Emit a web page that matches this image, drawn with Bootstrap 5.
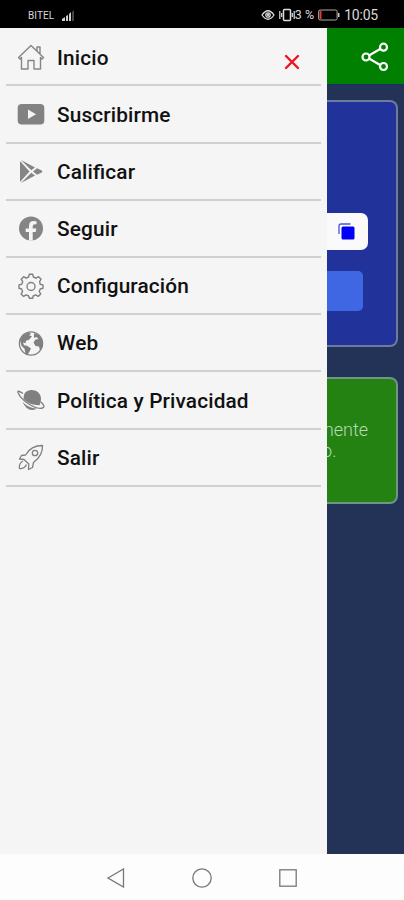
<!DOCTYPE html>
<html lang="es">
<head>
<meta charset="utf-8">
<meta name="viewport" content="width=device-width, initial-scale=1">
<title>Menú</title>
<link href="https://cdn.jsdelivr.net/npm/bootstrap@5.3.0/dist/css/bootstrap.min.css" rel="stylesheet">
<style>
body{font-family:Roboto,"Noto Sans",sans-serif;background:#fdfdfd;height:900px;overflow:hidden}
svg{display:block;flex:none}
.status{height:28px;background:#000;color:#d8d8d8;padding:2px 26px 0 28px}
.carrier{font-size:10px;letter-spacing:.1px;font-weight:400}
.clock{font-size:14px;letter-spacing:-.2px}
.pct{font-size:12.5px}
.stage{height:826px}
.drawer{width:326.5px;background:#f5f5f5;padding:0 6px}
.item{height:57.2px;border-bottom:2px solid #d0d0d0;padding:2px 0 0 11px;color:#111;font-size:20.8px;font-weight:500;letter-spacing:.15px;font-feature-settings:"liga" 1;line-height:1}
.item:first-child{height:58.4px}
.item:first-child span{padding-top:2px}
.item svg{width:28px;height:28px;margin-right:12px}
.item .closer{width:16px;height:16px;margin:9px 21px 0 auto}
.page{width:77.5px;background:#233358}
.topbar{height:57px;background:#008000;border-bottom:1px solid #17306a;padding:1px 15px 0 0}
.panel{width:71.5px;border:2px solid #6d7b9c;border-left:0;border-radius:0 8px 8px 0}
.blue{height:247px;margin-top:15px;background:#21339a}
.green{height:127px;margin-top:30px;background:#238212;border-color:#6f9583;color:#b9dab4;font-size:18px;line-height:21.5px;font-weight:300}
.field{width:41px;height:37px;margin-top:111px;background:#fafafa;border-radius:0 7px 7px 0;padding-right:13px}
.action{width:36px;height:40px;margin-top:21px;background:#4067e3;border-radius:0 5px 5px 0}
.l1{width:41.5px;margin-top:39.5px}
.l2{width:10px}
.sysnav{height:46px;padding:2px 107px 0 107px}
</style>
</head>
<body>
<header class="status d-flex align-items-center">
  <span class="carrier">BITEL</span>
  <svg class="ms-2" width="13" height="11" viewBox="0 0 13 11"><path d="M0 11V9l3-2v4zM4 11V6l2-1v6zM7 11V4l2-2v9z" fill="#d0d0d0"/><path d="M10 11V2l2-2v11z" fill="#444"/></svg>
  <div class="d-flex align-items-center ms-auto">
    <svg width="14" height="12" viewBox="0 0 14 12" fill="none" stroke="#ddd" stroke-width="1.3"><path d="M1 6q6-8.500 12 0q-6 8.500-12 0z"/><circle cx="7" cy="6" r="2.200"/><circle cx="7" cy="6" r=".5"/></svg>
    <svg class="ms-1" width="16" height="14" viewBox="0 0 16 14" fill="none" stroke="#ddd" stroke-width="1.200"><rect x="4.500" y="1.500" width="7" height="11" rx="1" stroke-width="1.500"/><path d="M.8 3v8M2.700 5v4M13.300 5v4M15.200 3v8"/></svg>
    <span class="pct">3 %</span>
    <svg class="ms-1" width="22" height="12" viewBox="0 0 22 12"><rect x=".6" y="1" width="18.500" height="10" rx="1.500" fill="none" stroke="#aaa"/><path d="M1.500 2h2v8h-2z" fill="#e23a2c"/><path d="M20.700 4v4" stroke="#ccc" stroke-width="1.500"/></svg>
    <span class="clock ms-1">10:05</span>
  </div>
</header>
<main class="stage d-flex overflow-hidden">
  <nav class="drawer flex-shrink-0">
    <div class="item d-flex align-items-center">
      <svg viewBox="0 0 28 28" fill="none" stroke="#858585" stroke-width="1.400" stroke-linejoin="round"><path d="M1.500 14.500L14 2.500l12.500 12-1.500 1.500-1.500-1.500V26h-6.500v-8.500h-6V26H4.500V14.500L3 16zM20 8V4h3v7"/></svg>
      <span>Inicio</span>
      <svg class="closer" viewBox="0 0 16 16" stroke="#f0141c" stroke-width="2.400" stroke-linecap="round"><path d="M2 2l12 12M14 2L2 14"/></svg>
    </div>
    <div class="item d-flex align-items-center">
      <svg viewBox="0 0 28 28"><rect x=".7" y="3" width="26.600" height="20.500" rx="4" fill="#828282"/><path d="M11 8.500l8 4.800-8 4.800z" fill="#f5f5f5"/></svg>
      <span>Suscribirme</span>
    </div>
    <div class="item d-flex align-items-center">
      <svg viewBox="0 0 28 28" fill="#858585"><path d="M3 3v21l9.500-10.500z"/><path d="M4 2l14 7.500-3.700 2.800zM4 25l10.300-10.300 3.700 2.800zM16 13.500l4-3.300 4.800 2.300q1 1 0 2L20 16.800z"/></svg>
      <span>Calificar</span>
    </div>
    <div class="item d-flex align-items-center">
      <svg viewBox="0 0 28 28"><circle cx="14" cy="13.500" r="12" fill="#858585"/><path d="M12 25.500v-8.500H8.700v-3.500H12V11q0-5 4.700-5 1.500 0 2.800.3v3H18q-2.300 0-2.300 2v2.200h3.600l-.6 3.500h-3v8.500z" fill="#f5f5f5"/></svg>
      <span>Seguir</span>
    </div>
    <div class="item d-flex align-items-center">
      <svg viewBox="0 0 28 28" fill="none" stroke="#808080" stroke-width="1.400" stroke-linejoin="round"><path d="M11.600 4l.7-2.700h3.400l.7 2.700 2.700 1.200 2.500-1.500 2.500 2.500-1.500 2.500.6 2.600 2.800.6v3.400l-2.800.7-1 2.500 1.500 2.400-2.500 2.500-2.500-1.500-2.500 1.100-.6 2.200h-3.200l-.8-2.200-2.500-1.100-2.500 1.500-2.500-2.500 1.500-2.400-1-2.500L2 15.300v-3.400l2.700-.6 1-2.600-1.500-2.500 2.500-2.500 2.400 1.500z"/><circle cx="14" cy="13.500" r="4"/></svg>
      <span>Configuración</span>
    </div>
    <div class="item d-flex align-items-center">
      <svg viewBox="0 0 28 28"><circle cx="14" cy="13.500" r="11.600" fill="none" stroke="#808080" stroke-width="1.300"/><path d="M3 10Q5 4 12 2.200l2 1.500-2 1.500 3 1-3 3.500-3 1-.5 2.500-2.500-.7 1 2.700 3 .5 4 2.700-1.500 3-2 3.300-2-1-1-5-3-3zM17 3l5 2 3.500 6v6l-2.500 3.500-1-4-3.500-.5-2-3.500 2-3 3-.5-2-2-2.500 1z" fill="#808080"/></svg>
      <span>Web</span>
    </div>
    <div class="item d-flex align-items-center">
      <svg viewBox="0 0 28 28"><path d="M6.500 12Q6 4 13.500 3q9-.5 10.500 8 .3 4-1.500 7.200Q13 18.500 6.500 12zM5.500 15q6 6 14.500 6.700Q10.500 26 5.500 15z" fill="#808080"/><path d="M6 6.500Q0 2.500 1 5.500q2 5.500 10 11 9 6 14.500 4.500 3.500-1-1.500-6" fill="none" stroke="#808080" stroke-width="1.300"/></svg>
      <span>Política y Privacidad</span>
    </div>
    <div class="item d-flex align-items-center">
      <svg viewBox="0 0 28 28" fill="none" stroke="#808080" stroke-width="1.300" stroke-linejoin="round"><path d="M8.500 11Q14 1.500 25.500 1.500q.5 10-9 17l-1 5-4 2 .3-5.500L7 15.500l-4.500-.5 2-3.500zM6 17Q1.500 19.500 2.500 24.500q5 .5 7-4"/><circle cx="18" cy="9" r="2.700"/></svg>
      <span>Salir</span>
    </div>
  </nav>
  <section class="page flex-shrink-0">
    <div class="topbar d-flex align-items-center justify-content-end">
      <svg width="28" height="30" viewBox="0 0 28 30" fill="none" stroke="#fff" stroke-width="2.200"><path d="M8 13.500L20 6.500M8 16.500l12 7"/><circle cx="5" cy="15" r="3.500"/><circle cx="22.500" cy="5.200" r="3.500"/><circle cx="22.500" cy="24.500" r="3.500"/></svg>
    </div>
    <div class="panel blue d-flex flex-column">
      <div class="field d-flex align-items-center justify-content-end">
        <svg width="17" height="17" viewBox="0 0 17 17"><path d="M1 11V3q0-2 2-2h9.500" fill="none" stroke="#4a55d8" stroke-width="1.300"/><rect x="3.500" y="3.500" width="13" height="13" rx="1.500" fill="#0000f5"/></svg>
      </div>
      <div class="action"></div>
    </div>
    <div class="panel green d-flex flex-column">
      <div class="l1 d-flex justify-content-end overflow-hidden"><span>mente</span></div>
      <div class="l2 d-flex justify-content-end overflow-hidden"><span>o.</span></div>
    </div>
  </section>
</main>
<footer class="sysnav d-flex align-items-center justify-content-between">
  <svg width="18" height="20" viewBox="0 0 18 20" fill="none" stroke="#777" stroke-width="1.300"><path d="M1 10L16.500 1v18z"/></svg>
  <svg width="20" height="20" viewBox="0 0 20 20" fill="none" stroke="#777" stroke-width="1.300"><circle cx="10" cy="10" r="9.200"/></svg>
  <svg width="18" height="18" viewBox="0 0 18 18" fill="none" stroke="#777" stroke-width="1.300"><rect x=".8" y=".8" width="16.400" height="16.400"/></svg>
</footer>
<script src="https://cdn.jsdelivr.net/npm/bootstrap@5.3.0/dist/js/bootstrap.bundle.min.js"></script>
</body>
</html>
